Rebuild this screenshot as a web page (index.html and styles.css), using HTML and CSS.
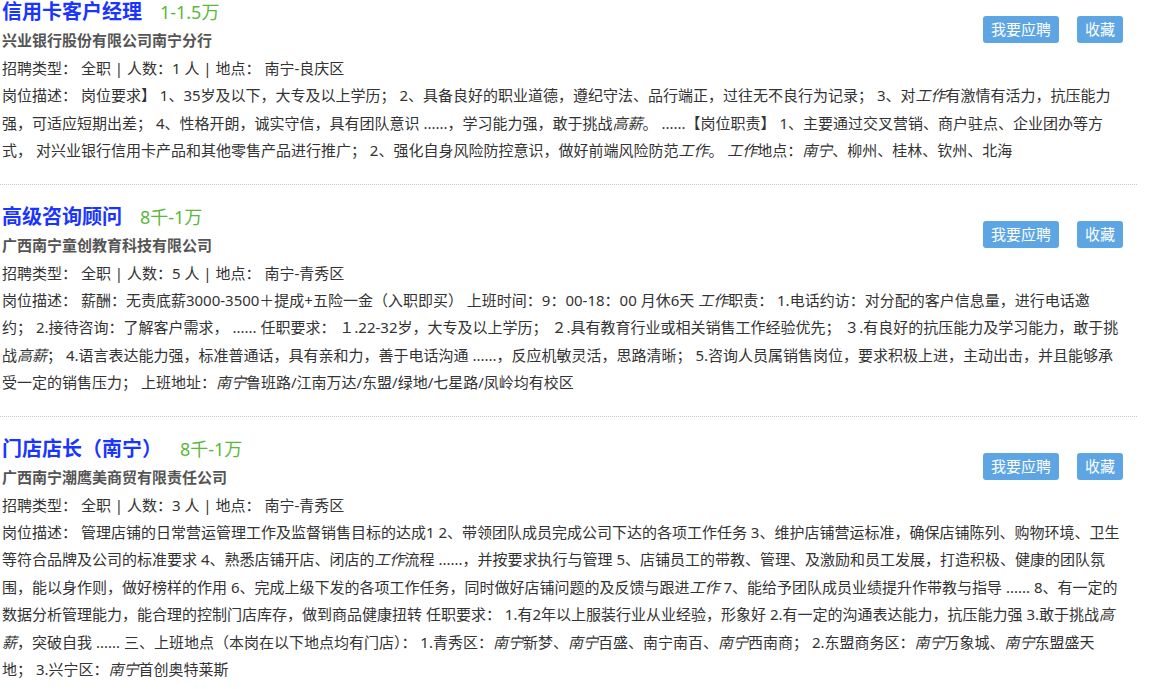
FILE: index.html
```html
<!DOCTYPE html>
<html lang="zh-CN">
  <head>
    <meta charset="UTF-8" />
    <meta name="viewport" content="width=device-width, initial-scale=1.0" />
    <title>职位列表</title>
    <link rel="stylesheet" href="styles.css">
  </head>
  <body>
    <div class="job-list">
      <div class="job">
        <div class="actions">
          <button>我要应聘</button>
          <button>收藏</button>
        </div>
        <div class="title">
          <span class="name">信用卡客户经理</span>
          <span class="salary">1-1.5万</span>
        </div>
        <div class="company">兴业银行股份有限公司南宁分行</div>
        <div class="info">招聘类型： 全职 | 人数：1 人 | 地点： 南宁-良庆区</div>
        <div class="desc">
          岗位描述： 岗位要求】 1、35岁及以下，大专及以上学历； 2、具备良好的职业道德，遵纪守法、品行端正，过往无不良行为记录； 3、对<em>工作</em>有激情有活力，抗压能力<br />
          强，可适应短期出差； 4、性格开朗，诚实守信，具有团队意识 ......，学习能力强，敢于挑战<em>高薪</em>。 ......【岗位职责】 1、主要通过交叉营销、商户驻点、企业团办等方<br />
          式， 对兴业银行信用卡产品和其他零售产品进行推广； 2、强化自身风险防控意识，做好前端风险防范<em>工作</em>。 <em>工作</em>地点：<em>南宁</em>、柳州、桂林、钦州、北海
        </div>
      </div>

      <div class="job">
        <div class="actions">
          <button>我要应聘</button>
          <button>收藏</button>
        </div>
        <div class="title">
          <span class="name">高级咨询顾问</span>
          <span class="salary">8千-1万</span>
        </div>
        <div class="company">广西南宁童创教育科技有限公司</div>
        <div class="info">招聘类型： 全职 | 人数：5 人 | 地点： 南宁-青秀区</div>
        <div class="desc">
          岗位描述： 薪酬：无责底薪3000-3500＋提成+五险一金（入职即买） 上班时间：9：00-18：00 月休6天 <em>工作</em>职责： 1.电话约访：对分配的客户信息量，进行电话邀<br />
          约； 2.接待咨询：了解客户需求， ...... 任职要求： １.22-32岁，大专及以上学历； ２.具有教育行业或相关销售工作经验优先； ３.有良好的抗压能力及学习能力，敢于挑<br />
          战<em>高薪</em>； 4.语言表达能力强，标准普通话，具有亲和力，善于电话沟通 ......，反应机敏灵活，思路清晰； 5.咨询人员属销售岗位，要求积极上进，主动出击，并且能够承<br />
          受一定的销售压力； 上班地址：<em>南宁</em>鲁班路/江南万达/东盟/绿地/七星路/凤岭均有校区
        </div>
      </div>

      <div class="job">
        <div class="actions">
          <button>我要应聘</button>
          <button>收藏</button>
        </div>
        <div class="title">
          <span class="name">门店店长（南宁）</span>
          <span class="salary">8千-1万</span>
        </div>
        <div class="company">广西南宁潮鹰美商贸有限责任公司</div>
        <div class="info">招聘类型： 全职 | 人数：3 人 | 地点： 南宁-青秀区</div>
        <div class="desc">
          岗位描述： 管理店铺的日常营运管理工作及监督销售目标的达成1 2、带领团队成员完成公司下达的各项工作任务 3、维护店铺营运标准，确保店铺陈列、购物环境、卫生<br />
          等符合品牌及公司的标准要求 4、熟悉店铺开店、闭店的<em>工作</em>流程 ......，并按要求执行与管理 5、店铺员工的带教、管理、及激励和员工发展，打造积极、健康的团队氛<br />
          围，能以身作则，做好榜样的作用 6、完成上级下发的各项工作任务，同时做好店铺问题的及反馈与跟进<em>工作</em> 7、能给予团队成员业绩提升作带教与指导 ...... 8、有一定的<br />
          数据分析管理能力，能合理的控制门店库存，做到商品健康扭转 任职要求： 1.有2年以上服装行业从业经验，形象好 2.有一定的沟通表达能力，抗压能力强 3.敢于挑战<em>高</em><br />
          <em>薪</em>，突破自我 ...... 三、上班地点（本岗在以下地点均有门店）： 1.青秀区：<em>南宁</em>新梦、<em>南宁</em>百盛、南宁南百、<em>南宁</em>西南商； 2.东盟商务区：<em>南宁</em>万象城、<em>南宁</em>东盟盛天<br />
          地； 3.兴宁区：<em>南宁</em>首创奥特莱斯
        </div>
      </div>
    </div>
  </body>
</html>
```

FILE: styles.css
```css
body {
  margin: 0;
  font-family: "Noto Sans", "Noto Sans CJK SC", sans-serif;
  font-size: 15px;
  color: #333;
  background: #fff;
}
.job-list {
  width: 1137px;
}
.job {
  padding: 20px 14px 19px 2px;
  border-bottom: 1px dotted #c8c8c8;
}
.job:first-child {
  padding-top: 0;
}
.job:last-child {
  border-bottom: none;
}
.actions {
  float: right;
  display: flex;
  gap: 18px;
  margin-top: 16px;
}
.actions button {
  height: 27px;
  padding: 0 8px;
  font-family: inherit;
  font-size: 15px;
  line-height: 27px;
  color: #fff;
  background: #5da6e3;
  border: none;
  border-radius: 3px;
  cursor: pointer;
}
.title {
  height: 24px;
  line-height: 24px;
  white-space: nowrap;
}
.name {
  font-size: 20px;
  font-weight: bold;
  color: #1a35ff;
}
.salary {
  margin-left: 14px;
  font-size: 18px;
  color: #5cb83c;
}
.company {
  margin-top: 2px;
  font-size: 15px;
  font-weight: bold;
  line-height: 28px;
  color: #555;
}
.info {
  line-height: 28px;
}
.desc {
  line-height: 27.5px;
  white-space: nowrap;
}
.desc em {
  font-style: italic;
}
```
